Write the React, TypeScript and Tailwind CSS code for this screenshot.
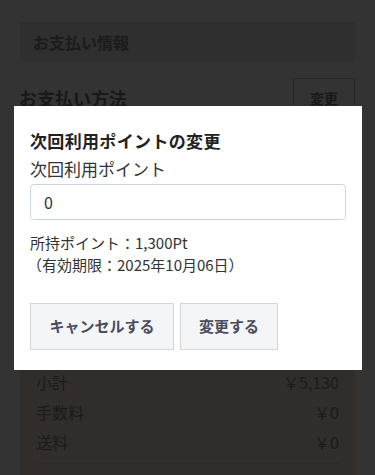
import { useState } from 'react';

const summaryRows = [
  { label: '小計', value: '￥5,130' },
  { label: '手数料', value: '￥0' },
  { label: '送料', value: '￥0' },
];

function PointModal() {
  const [points, setPoints] = useState('0');

  return (
    <div className="absolute left-[14px] top-[106px] w-[348px] bg-white px-4 pt-[24px] pb-5">
      <h2 className="text-[17px] font-bold leading-[22px] tracking-[0.02em] text-[#222]">次回利用ポイントの変更</h2>
      <label className="mt-[6px] block text-[17px] leading-[22px] text-[#333]">次回利用ポイント</label>
      <input
        value={points}
        onChange={e => setPoints(e.target.value)}
        className="mt-[4px] block h-9 w-full rounded-[4px] border border-[#cdd5dd] px-[13px] text-[16px] text-[#333] outline-none"
      />
      <div className="mt-[12px] text-[15px] leading-[22px] text-[#333]">
        <p>所持ポイント：1,300Pt</p>
        <p className="-ml-[3px]">（有効期限：2025年10月06日）</p>
      </div>
      <div className="mt-[27px] flex gap-[6px]">
        <button className="h-[47px] w-[144px] border border-[#d6d6d6] bg-[#f3f5f7] text-[15px] font-bold text-[#4a4d5e]">
          キャンセルする
        </button>
        <button className="h-[47px] w-[98px] border border-[#d6d6d6] bg-[#f3f5f7] text-[15px] font-bold text-[#4a4d5e]">
          変更する
        </button>
      </div>
    </div>
  );
}

export default function App() {
  return (
    <div
      className="relative h-[475px] overflow-hidden bg-white"
      style={{ fontFamily: '"Noto Sans CJK JP", "Noto Sans", sans-serif' }}
    >
      <main className="px-5 pt-[22px]">
        {/* Section 1: header */}
        <div className="flex h-[39px] items-center bg-[#e8e8e8] px-[13px] text-[16px] font-bold text-[#8a8a8a]">
          お支払い情報
        </div>

        {/* Section 2: payment method (body covered by the modal) */}
        <section className="mt-[17px] flex items-start justify-between">
          <h3 className="mt-[8px] -ml-[1px] text-[18px] font-bold leading-6 text-[#777]">お支払い方法</h3>
          <button className="h-[40px] w-[62px] border border-[#cccccc] text-[14px] font-bold text-[#777]">変更</button>
        </section>
        <div className="h-[244px]" />

        {/* Section 3: summary */}
        <section className="bg-[#f5e2d3] px-4 pt-[5px] pb-4">
          {summaryRows.map(row => (
            <div key={row.label} className="flex h-[30px] items-center justify-between text-[16px] text-[#888]">
              <span>{row.label}</span>
              <span>{row.value}</span>
            </div>
          ))}
          <div className="mt-[6px] border-t border-dotted border-[#bbbbbb]" />
          <div className="h-10" />
        </section>
      </main>

      {/* Overlay */}
      <div className="absolute inset-0 bg-black/80" />
      <PointModal />
    </div>
  );
}
